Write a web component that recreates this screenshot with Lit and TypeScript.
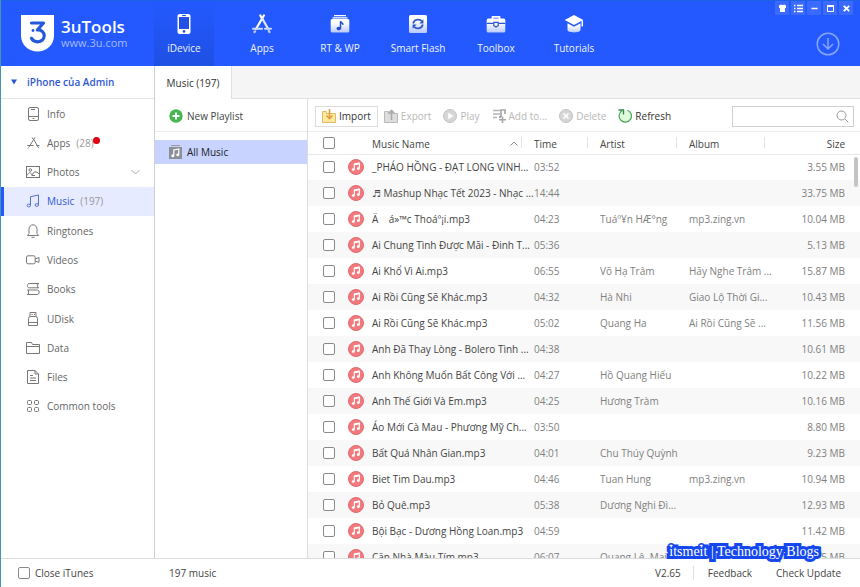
import { LitElement, html, svg, css, TemplateResult } from "lit";
import { customElement, property, state } from "lit/decorators.js";
import { classMap } from "lit/directives/class-map.js";

type Row = { name: string; time: string; artist: string; album: string; size: string };
const row = (name: string, time: string, size: string, artist = "", album = ""): Row => ({ name, time, artist, album, size });

const ROWS: Row[] = [
  row("_PHÁO HỒNG - ĐẠT LONG VINH...", "03:52", "3.55 MB"),
  row("♬ Mashup Nhạc Tết 2023 - Nhạc ...", "14:44", "33.75 MB"),
  row("Ä\u00a0\u00a0\u00a0\u00a0á»™c Thoáº¡i.mp3", "04:23", "10.04 MB", "Tuáº¥n HÆ°ng", "mp3.zing.vn"),
  row("Ai Chung Tình Được Mãi - Đinh T...", "05:36", "5.13 MB"),
  row("Ai Khổ Vì Ai.mp3", "06:55", "15.87 MB", "Võ Hạ Trâm", "Hãy Nghe Trâm ..."),
  row("Ai Rồi Cũng Sẽ Khác.mp3", "04:32", "10.43 MB", "Hà Nhi", "Giao Lộ Thời Gi..."),
  row("Ai Rồi Cũng Sẽ Khác.mp3", "05:02", "11.56 MB", "Quang Ha", "Ai Rồi Cũng Sẽ ..."),
  row("Anh Đã Thay Lòng - Bolero Tình ...", "04:38", "10.61 MB"),
  row("Anh Không Muốn Bất Công Với ...", "04:27", "10.22 MB", "Hồ Quang Hiếu"),
  row("Anh Thế Giới Và Em.mp3", "04:25", "10.16 MB", "Hương Tràm"),
  row("Áo Mới Cà Mau - Phương Mỹ Ch...", "03:50", "8.80 MB"),
  row("Bất Quá Nhân Gian.mp3", "04:01", "9.23 MB", "Chu Thúy Quỳnh"),
  row("Biet Tim Dau.mp3", "04:46", "10.94 MB", "Tuan Hung", "mp3.zing.vn"),
  row("Bỏ Quê.mp3", "05:38", "12.93 MB", "Dương Nghi Đì..."),
  row("Bội Bạc - Dương Hồng Loan.mp3", "04:59", "11.42 MB"),
  row("Căn Nhà Màu Tím.mp3", "06:07", "9.65 MB", "Quang Lê, Mai ..."),
];

const fade = svg`<defs><linearGradient id="f" x1="0" y1="0" x2="0" y2="1"><stop offset="0.3" stop-color="#fff"/><stop offset="1" stop-color="#b9c9ff"/></linearGradient></defs>`;

/* 20px glyphs of the top bar */
const TOP: Record<string, TemplateResult> = {
  idevice: svg`<rect x="3.500" y="0" width="13" height="20" rx="2" fill="#fff"/><rect x="5" y="3" width="10" height="12" fill="#2350e2"/><rect x="8" y="1" width="4" height="1" rx="0.500" fill="#2350e2"/><circle cx="10" cy="17.400" r="1.300" fill="#2350e2"/>`,
  apps: svg`<g fill="none" stroke="#fff" stroke-linecap="round" stroke-width="2.200"><path d="M8.300 1.500l1.700 3M11.900 1.500L4 15"/><path d="M10.300 4.500l5.600 10" stroke="#dfe6ff"/><path d="M1 14.700h9M13 14.700h6" stroke="#cdd8ff" stroke-width="2"/><path d="M3 17.300l-.5.700M16.800 17l.7 1" stroke="#b9c9ff"/></g>`,
  rtwp: svg`<path d="M4 1.700h12M2.500 3.800h15" stroke="#fff" stroke-width="1.200"/><rect x="0.700" y="5" width="18.600" height="13.600" rx="1.500" fill="url(#f)"/><path d="M10.500 14.500V7.300c.5 1.500 2.700 1.200 2.400 3.600" fill="none" stroke="#2350c8" stroke-width="1.500"/><ellipse cx="8.800" cy="14.600" rx="2.300" ry="1.800" fill="#2350c8"/>`,
  flash: svg`<rect x="1" y="1" width="18" height="18" rx="1.500" fill="url(#f)"/><g fill="none" stroke="#2b55c8" stroke-width="1.700"><path d="M5.200 9.500A5 4.600 0 0 1 14 7.300M14.800 10.500A5 4.600 0 0 1 6 12.700"/></g><path d="M15.400 5.300v4.200h-4zM4.600 14.700v-4.200h4z" fill="#2b55c8"/>`,
  toolbox: svg`<path d="M6.500 5V2.900h7V5" fill="none" stroke="#fff" stroke-width="1.700"/><rect x="0.700" y="4.600" width="18.600" height="14" rx="1.500" fill="url(#f)"/><path d="M1 9.300h6.700M12.300 9.300H19" stroke="#2b55d8" stroke-width="1.200"/><path d="M7.800 8.400h4.400v3.200L10 13l-2.200-1.400z" fill="#fff" stroke="#2b55d8" stroke-width="1.200"/>`,
  tutorials: svg`<path d="M10 1l9.300 5L10 11 .7 6z" fill="#fff"/><path d="M3.500 9.300L10 12.800l6.500-3.500V16c0 3.200-13 3.200-13 0z" fill="url(#f)"/><path d="M18.300 6.500v6" stroke="#fff" stroke-width="1.500"/>`,
};

/* 14px outline glyphs of the sidebar */
const SIDE: Record<string, TemplateResult> = {
  Info: svg`<rect x="2.500" y="0.500" width="10" height="13" rx="1.500"/><path d="M5 2.500h4M2.500 9.500h10M6.500 11.500h2"/>`,
  Apps: svg`<path d="M6 1.300l1.500 2.200M9 1.300L3 11M8 3.800l4.700 8.400M1.300 9.500h6.200M10.300 9.500h3.200M2.500 11.500l-.7 1"/>`,
  Photos: svg`<rect x="0.500" y="1.500" width="13" height="11"/><circle cx="4.300" cy="5" r="1.300"/><path d="M1 10.500c2-4 4-3.500 5 0 1-4 4.500-5 7-1.500M6 10.500h3"/>`,
  Music: svg`<path d="M4.500 11.500V2.700L12.500 1v9.500"/><ellipse cx="2.800" cy="11.500" rx="1.700" ry="1.400"/><ellipse cx="10.800" cy="11" rx="1.700" ry="1.400"/>`,
  Ringtones: svg`<path d="M1.500 11.500h11L11 9.500V5.300C11 -.7 3 -.7 3 5.300v4.200zM5.500 13.300h3"/>`,
  Videos: svg`<rect x="0.500" y="2.800" width="8.700" height="8" rx="1.500"/><path d="M9.200 6l3.800-1.500v4.800L9.200 8"/>`,
  Books: svg`<path d="M13 1.500H3.200C.8 1.500.8 5.800 3.200 5.800H13M11.700 1.500v4.300M1 8h10.700c2 0 2 4.500 0 4.500H1M2.500 8v4.500"/>`,
  UDisk: svg`<path d="M4 4.500v-4h6v4M2.500 13.500v-7q0-2 2-2h5q2 0 2 2v7zM2.500 10.500h9M5.500 2.500h1M8 2.500h1"/>`,
  Data: svg`<path d="M.5 12.500v-11h5l1 2h7v9zM.5 5.500h13"/>`,
  Files: svg`<path d="M9 .5H1.500v13h11V4zM9 .5V4h3.500M4 5.500h3M4 8h6M4 10.500h6"/>`,
  "Common tools": svg`<rect x="1.500" y="1.500" width="4" height="4" rx="1"/><rect x="8.500" y="1.500" width="4" height="4" rx="1"/><rect x="1.500" y="8.500" width="4" height="4" rx="1"/><rect x="8.500" y="8.500" width="4" height="4" rx="1"/>`,
};

/* 14px glyphs of the list toolbar */
const TOOL: Record<string, TemplateResult> = {
  Import: svg`<path d="M.5 2.500h4v2h9v9H.5z" fill="#ffe7a3" stroke="#e5bb62"/><path d="M7.500 0v9M4.500 6.500l3 3 3-3" fill="none" stroke="#d9a03c" stroke-width="1.600"/>`,
  Export: svg`<path d="M.5 2.500h4v2h9v9H.5z" fill="#ddd" stroke="#bbb"/><path d="M7.500 11V1.500M4.500 4.500l3-3 3 3" fill="none" stroke="#aaa" stroke-width="1.600"/>`,
  Play: svg`<circle cx="7" cy="7" r="6.500" fill="#d6d6d6" stroke="#c2c2c2"/><path d="M5.200 3.800v6.400L10.500 7z" fill="#fff"/>`,
  "Add to...": svg`<path d="M1 1.500h7M1 5h7M1 8.500h4" stroke="#b5b5b5" stroke-width="1.300"/><path d="M9 8V1h4v4M10.500 7.500V14M7 10.700h7" fill="none" stroke="#a5a5a5" stroke-width="1.600"/><circle cx="8" cy="8" r="1.200" fill="#a5a5a5"/>`,
  Delete: svg`<circle cx="7" cy="7" r="6.500" fill="#d6d6d6" stroke="#c2c2c2"/><path d="M4.500 4.500l5 5M9.500 4.500l-5 5" stroke="#fff" stroke-width="1.600"/>`,
  Refresh: svg`<path d="M4 1.700A6.200 6.200 0 1 0 9.500 1.200" fill="#e0f8dc" stroke="#45a552" stroke-width="1.200"/><path d="M.5 1h5v4.600" fill="none" stroke="#2f8a40" stroke-width="1.300"/>`,
};

const WIN: [string, TemplateResult][] = [
  ["Skin", svg`<path d="M1 1.500l2-1q1.500 1 3 0l2 1v2.500H7V8H2V4H1z" fill="#fff"/>`],
  ["Menu", svg`<path d="M0 1.500h1.500M0 4.500h1.500M0 7.500h1.500M3 1.500h6M3 4.500h6M3 7.500h6" stroke="#fff" stroke-width="1.500"/>`],
  ["Minimize", svg`<path d="M1.500 4.500h6" stroke="#fff" stroke-width="1.500"/>`],
  ["Maximize", svg`<path d="M1.500 2v5.500h6V2" fill="none" stroke="#fff"/><path d="M1 2h7" stroke="#fff" stroke-width="2"/>`],
  ["Close", svg`<path d="M1.800 1.800l5.400 5.400M7.200 1.800L1.800 7.200" stroke="#fff" stroke-width="1.800"/>`],
];

const base = css`
  * { box-sizing: border-box; }
  button { font: inherit; color: inherit; background: none; border: 0; padding: 0; margin: 0; white-space: nowrap; }
  svg { display: block; flex: none; }
  input[type="checkbox"] {
    appearance: none; display: block; width: 12px; height: 12px; margin: 0;
    border: 1px solid #8a8a8a; border-radius: 2px; background: #fff; flex: none;
  }
  input[type="checkbox"]:checked { background: #2359ff; }
`;

@customElement("top-bar")
class TopBar extends LitElement {
  static styles = [base, css`
    :host { display: flex; height: 66px; background: #2359ff; border-top: 1px solid #1c62e6; color: #eef2ff; }
    .brand { display: flex; width: 153px; flex: none; padding: 14px 0 0 20px; gap: 7px; }
    .names { display: flex; flex-direction: column; padding-top: 2px; }
    .title { font-size: 17px; line-height: 20px; font-weight: 600; color: #fff; }
    .site { font-size: 11px; line-height: 12px; color: #a4b9ff; }
    nav { display: flex; gap: 18px; flex: 1; }
    nav button { display: flex; flex-direction: column; align-items: center; width: 60px; padding-top: 13px; gap: 7px; line-height: 14px; }
    nav button.on { background: linear-gradient(#2359ff, #1f50e4); }
    .end { display: flex; flex-direction: column; align-items: flex-end; padding-right: 7px; }
    .win { display: flex; gap: 2px; }
    .win button { display: grid; place-items: center; width: 14px; height: 14px; background: #3a6aff; }
    .down { padding: 17px 13px 0 0; }
  `];
  render() {
    const items = [["idevice", "iDevice"], ["apps", "Apps"], ["rtwp", "RT & WP"], ["flash", "Smart Flash"], ["toolbox", "Toolbox"], ["tutorials", "Tutorials"]];
    return html`
      <div class="brand">
        <svg width="33" height="37" viewBox="0 0 33 37"><path d="M0 0h33v20.500C33 30 25.500 36.500 16.500 36.500S0 30 0 20.500z" fill="#fff"/><path d="M10.500 8h12l-6.200 7c9.200-.7 9.200 11.800.2 11.800-3 0-5-1.500-6-3.500" fill="none" stroke="#2359d8" stroke-width="3.200" stroke-linejoin="round" stroke-linecap="round"/><circle cx="12" cy="15.500" r="1.400" fill="#2359d8"/></svg>
        <div class="names"><span class="title">3uTools</span><span class="site">www.3u.com</span></div>
      </div>
      <nav>${items.map(([k, t], i) => html`<button class=${classMap({ on: i === 0 })}><svg width="20" height="20" viewBox="0 0 20 20">${fade}${TOP[k]}</svg>${t}</button>`)}</nav>
      <div class="end">
        <div class="win">${WIN.map(([t, g]) => html`<button aria-label=${t}><svg width="9" height="9" viewBox="0 0 9 9">${g}</svg></button>`)}</div>
        <button class="down" aria-label="Downloads"><svg width="24" height="24" viewBox="0 0 24 24" fill="none" stroke="#86a4ff" stroke-width="1.500"><circle cx="12" cy="12" r="10.800"/><path d="M12 6v11M7 12l5 5 5-5"/></svg></button>
      </div>`;
  }
}

@customElement("side-bar")
class SideBar extends LitElement {
  static styles = [base, css`
    :host { display: block; width: 154px; flex: none; border-right: 1px solid #d0d0d4; color: #666; }
    .device { display: flex; align-items: center; gap: 9px; width: 100%; height: 33px; padding: 0 9px; border-bottom: 1px solid #e4e4e6; color: #3158d0; font-weight: 600; }
    nav { display: grid; grid-template-rows: repeat(11, 1fr); height: 322px; }
    nav button { display: flex; align-items: center; padding-left: 25px; text-align: left; }
    nav svg { margin-right: 7px; fill: none; stroke: #777; }
    .count { margin-left: 6px; color: #999; }
    .dot { width: 7px; height: 7px; border-radius: 50%; background: #e00010; margin: 0 0 5px -1px; }
    .on { background: #e6ebff; color: #3158d0; box-shadow: inset 3px 0 #2359ff; }
    nav .on svg { stroke: #5572cc; }
    nav svg.chev { margin: 0 14px 0 auto; stroke: #aaa; }
  `];
  render() {
    const count: Record<string, string> = { Apps: "(28)", Music: "(197)" };
    return html`
      <button class="device"><svg width="8" height="6" viewBox="0 0 8 6"><path d="M1 0.500h6L4 5.500z" fill="#3158d0"/></svg>iPhone của Admin</button>
      <nav>${Object.keys(SIDE).map((k) => html`
        <button class=${classMap({ on: k === "Music" })}>
          <svg width="14" height="14" viewBox="0 0 14 14">${SIDE[k]}</svg>${k}
          ${count[k] ? html`<span class="count">${count[k]}</span>` : ""}
          ${k === "Apps" ? html`<span class="dot"></span>` : ""}
          ${k === "Photos" ? html`<svg class="chev" width="9" height="6" viewBox="0 0 9 6"><path d="M.5 1l4 4 4-4"/></svg>` : ""}
        </button>`)}</nav>`;
  }
}

@customElement("music-list")
class MusicList extends LitElement {
  @property({ attribute: false }) rows: Row[] = [];
  static styles = [base, css`
    :host { display: flex; flex-direction: column; flex: 1; min-width: 0; min-height: 0; }
    .tools { display: flex; align-items: center; height: 33px; flex: none; padding: 2px 6px 0 7px; border-bottom: 1px solid #ececee; }
    .tools button { display: flex; align-items: center; gap: 3px; height: 21px; padding: 0 6px; color: #333; }
    .tools button.boxed { border: 1px solid #dcdcdc; }
    .tools button:disabled { color: #b8b8b8; }
    .search { display: flex; align-items: center; width: 122px; height: 21px; margin-left: auto; border: 1px solid #cfcfcf; padding-right: 4px; }
    .search input { flex: 1; min-width: 0; border: 0; outline: 0; background: none; font: inherit; }
    .view { position: relative; flex: 1; min-height: 0; overflow: hidden; }
    table { width: 100%; border-collapse: collapse; table-layout: fixed; }
    th, td { padding: 0 0 0 12px; text-align: left; font-weight: 400; white-space: nowrap; }
    th { height: 22px; padding-top: 2px; color: #444; background: linear-gradient(#e2e2e4, #e2e2e4) no-repeat right center / 1px 11px; }
    thead tr { border-bottom: 1px solid #e8e8ea; }
    td { height: 26px; color: #808080; }
    tbody tr:nth-child(even) { background: #f8f8f8; }
    .check { width: 34px; padding-left: 15px; }
    .disc { width: 30px; padding-left: 6px; }
    .name { padding-left: 0; color: #444; }
    .time { width: 66px; }
    .artist { width: 89px; }
    .album { width: 88px; }
    .size { width: 95px; padding: 0 15px 0 0; text-align: right; }
    th.check, th.disc, th.size { background: none; }
    th.check { padding-top: 0; }
    th.size { padding-top: 2px; }
    .sort { display: flex; align-items: center; justify-content: space-between; width: 100%; padding-right: 4px; }
    .thumb { position: absolute; top: 25px; right: 2px; width: 4px; height: 30px; border-radius: 2px; background: #c4c4c6; }
  `];
  render() {
    return html`
      <div class="tools">
        ${Object.keys(TOOL).map((k) => html`<button class=${classMap({ boxed: k === "Import" })} ?disabled=${!(k === "Import" || k === "Refresh")}><svg width="14" height="14" viewBox="0 0 14 14">${TOOL[k]}</svg>${k}</button>`)}
        <label class="search"><input type="text" aria-label="Search"><svg width="13" height="13" viewBox="0 0 13 13" fill="none" stroke="#999"><circle cx="5.500" cy="5.500" r="4.500"/><path d="M8.800 8.800l3.500 3.500"/></svg></label>
      </div>
      <div class="view">
        <table>
          <thead><tr>
            <th class="check"><input type="checkbox" aria-label="Select all"></th><th class="disc"></th>
            <th class="name"><button class="sort">Music Name<svg width="8" height="5" viewBox="0 0 8 5" fill="none" stroke="#888"><path d="M.5 4.500L4 1l3.500 3.500"/></svg></button></th>
            <th class="time">Time</th><th class="artist">Artist</th><th class="album">Album</th><th class="size">Size</th>
          </tr></thead>
          <tbody>${this.rows.map((r) => html`<tr>
            <td class="check"><input type="checkbox" aria-label=${"Select " + r.name}></td>
            <td class="disc"><svg width="16" height="16" viewBox="0 0 16 16"><circle cx="8" cy="8" r="7.500" fill="#f07a7e" stroke="#e5686e"/><path d="M6.300 10.500V5.200l5-1v5.300" fill="none" stroke="#fff" stroke-width="1.200"/><path d="M6.300 5.300l5-1" stroke="#fff" stroke-width="1.800"/><circle cx="5.300" cy="10.600" r="1.400" fill="#fff"/><circle cx="10.300" cy="9.700" r="1.400" fill="#fff"/></svg></td>
            <td class="name">${r.name}</td><td class="time">${r.time}</td><td class="artist">${r.artist}</td><td class="album">${r.album}</td><td class="size">${r.size}</td>
          </tr>`)}</tbody>
        </table>
        <div class="thumb"></div>
      </div>`;
  }
}

@customElement("app-root")
class AppRoot extends LitElement {
  @state() private rows = ROWS;
  static styles = [base, css`
    :host {
      display: flex; flex-direction: column; height: 100vh; overflow: hidden; position: relative; background: #fff;
      border-left: 1px solid #4595b0; font: 10px/14px "Open Sans", "Noto Sans", "DejaVu Sans", sans-serif; color: #444;
    }
    .body { display: flex; flex: 1; min-height: 0; }
    .content { display: flex; flex-direction: column; flex: 1; min-width: 0; }
    .tabs { display: flex; height: 33px; flex: none; background: #f5f5f5; }
    .tabs button { width: 77px; background: #fff; border-right: 1px solid #e0e0e0; color: #333; }
    .tabs span { flex: 1; border-bottom: 1px solid #e0e0e0; }
    .panes { display: flex; flex: 1; min-height: 0; }
    .lists { display: flex; flex-direction: column; width: 153px; flex: none; border-right: 1px solid #dcdce0; }
    .lists button { display: flex; align-items: center; gap: 4px; padding-left: 14px; }
    .lists .new { height: 33px; padding-top: 2px; border-bottom: 1px solid #ececee; }
    .lists .all { height: 24px; margin-top: 8px; background: #c8d3ff; color: #222; gap: 5px; }
    footer { display: flex; align-items: center; height: 29px; flex: none; border-top: 1px solid #dcdce0; padding: 0 19px 0 17px; }
    footer label { display: flex; align-items: center; gap: 5px; width: 151px; }
    footer a { color: inherit; text-decoration: none; }
    .ver { margin-left: auto; padding-right: 12px; border-right: 1px solid #e0e0e0; }
    .feed { padding: 0 24px 0 14px; }
    .mark {
      position: absolute; right: 41px; bottom: 26px; font: 14px/18px "Liberation Serif", serif; color: #fff;
      -webkit-text-stroke: 6px #1448ee; stroke-linejoin: round; paint-order: stroke fill; white-space: nowrap;
    }
  `];
  render() {
    return html`
      <top-bar></top-bar>
      <div class="body">
        <side-bar></side-bar>
        <div class="content">
          <div class="tabs"><button>Music (197)</button><span></span></div>
          <div class="panes">
            <div class="lists">
              <button class="new"><svg width="14" height="14" viewBox="0 0 14 14"><circle cx="7" cy="7" r="6.700" fill="#47b552"/><path d="M7 3.500v7M3.500 7h7" stroke="#fff" stroke-width="1.800"/></svg>New Playlist</button>
              <button class="all"><svg width="13" height="14" viewBox="0 0 13 14"><path d="M2 .5h9" stroke="#999"/><rect y="2" width="13" height="12" fill="#8d8f98"/><path d="M4.800 10.500V5l5-1v5.500" fill="none" stroke="#fff" stroke-width="1.200"/><circle cx="3.800" cy="10.700" r="1.500" fill="#fff"/><circle cx="8.800" cy="9.700" r="1.500" fill="#fff"/></svg>All Music</button>
            </div>
            <music-list .rows=${this.rows}></music-list>
          </div>
        </div>
      </div>
      <footer>
        <label><input type="checkbox">Close iTunes</label><span>197 music</span>
        <span class="ver">V2.65</span><a class="feed" href="#">Feedback</a><a href="#">Check Update</a>
      </footer>
      <span class="mark">itsmeit | Technology Blogs</span>`;
  }
}
